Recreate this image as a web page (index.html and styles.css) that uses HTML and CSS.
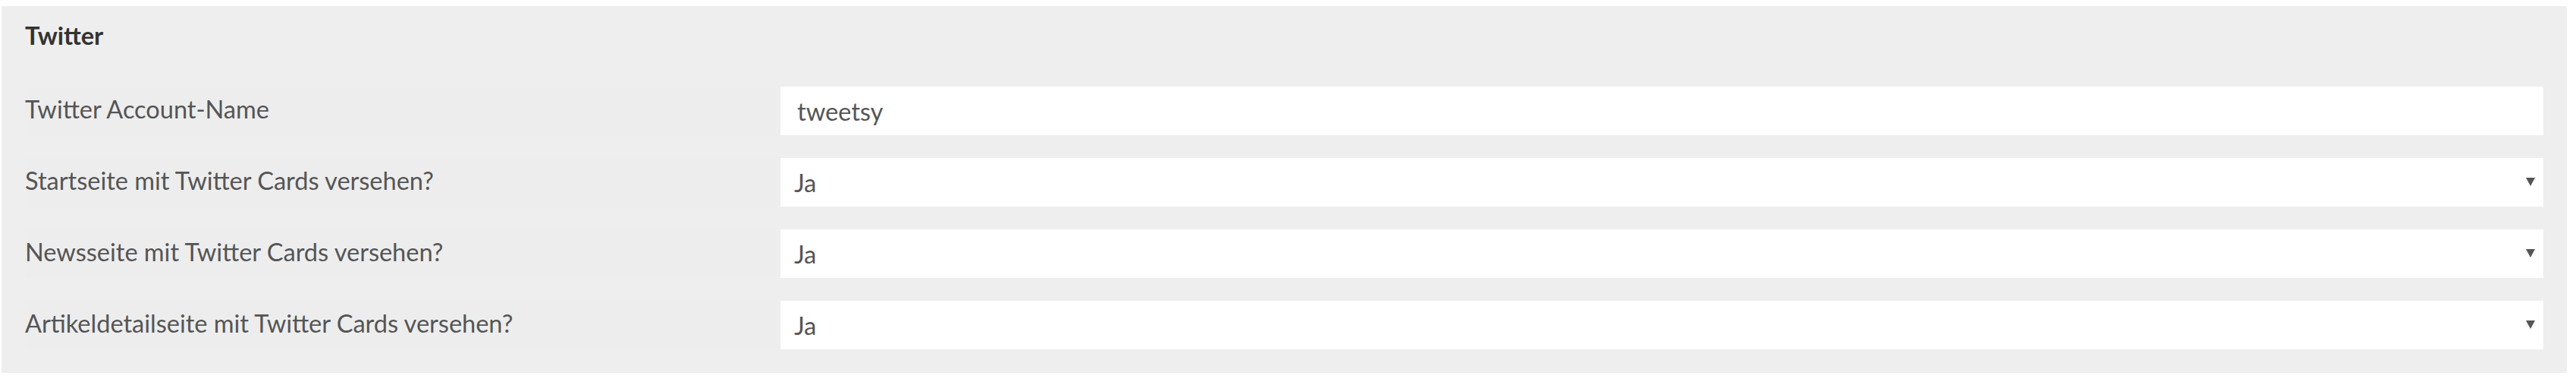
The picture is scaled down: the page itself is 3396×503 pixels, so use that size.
FILE: index.html
```html
<!DOCTYPE html>
<html lang="de">
<head>
<meta charset="utf-8">
<title>Twitter</title>
<link rel="stylesheet" href="styles.css">
</head>
<body>
<section class="panel">
  <h3 class="panel-title">Twitter</h3>
  <div class="form">
    <div class="row">
      <label class="label" for="acc">Twitter Account-Name</label>
      <div class="field"><input class="control input" id="acc" type="text" value="tweetsy"></div>
    </div>
    <div class="row">
      <label class="label" for="s1">Startseite mit Twitter Cards versehen?</label>
      <div class="field select-wrap"><select class="control select" id="s1"><option>Ja</option><option>Nein</option></select></div>
    </div>
    <div class="row">
      <label class="label" for="s2">Newsseite mit Twitter Cards versehen?</label>
      <div class="field select-wrap"><select class="control select" id="s2"><option>Ja</option><option>Nein</option></select></div>
    </div>
    <div class="row">
      <label class="label" for="s3">Artikeldetailseite mit Twitter Cards versehen?</label>
      <div class="field select-wrap"><select class="control select" id="s3"><option>Ja</option><option>Nein</option></select></div>
    </div>
  </div>
</section>
</body>
</html>
```

FILE: styles.css
```css
html, body {
  background: #ffffff;
}
body {
  margin: 8px 12px 12px 2px;
  font-family: Lato, "Open Sans", "Liberation Sans", sans-serif;
  font-size: 32.5px;
  color: #555555;
}
.panel {
  background: #eeeeee;
  border-radius: 3px;
  box-shadow: 0 1px 1px rgba(0, 0, 0, 0.06);
  padding: 19px 31px 31px 31px;
  height: 483px;
  box-sizing: border-box;
}
.panel-title {
  margin: 0;
  font-size: 32.5px;
  line-height: 40px;
  font-weight: 700;
  color: #333333;
}
.form {
  margin-top: 47px;
  display: flex;
  flex-direction: column;
  gap: 30px;
}
.row {
  display: grid;
  grid-template-columns: 996px 1fr;
  height: 64px;
}
.label {
  display: block;
  background: #ededed;
  line-height: 40px;
  padding-top: 10px;
  box-sizing: border-box;
  height: 64px;
  margin-right: 6px;
}
.field {
  position: relative;
}
.control {
  display: block;
  width: 100%;
  height: 64px;
  box-sizing: border-box;
  border: none;
  background: #ffffff;
  font-family: Lato, "Open Sans", "Liberation Sans", sans-serif;
  font-size: 32.5px;
  color: #555555;
  outline: none;
  border-radius: 0;
}
.input {
  padding: 0 22px;
}
.select {
  appearance: none;
  -webkit-appearance: none;
  padding: 0 50px 0 18px;
}
.select-wrap::after {
  content: "";
  position: absolute;
  right: 11px;
  top: 26px;
  width: 0;
  height: 0;
  border-left: 6px solid transparent;
  border-right: 6px solid transparent;
  border-top: 11px solid #555555;
  pointer-events: none;
}
```
